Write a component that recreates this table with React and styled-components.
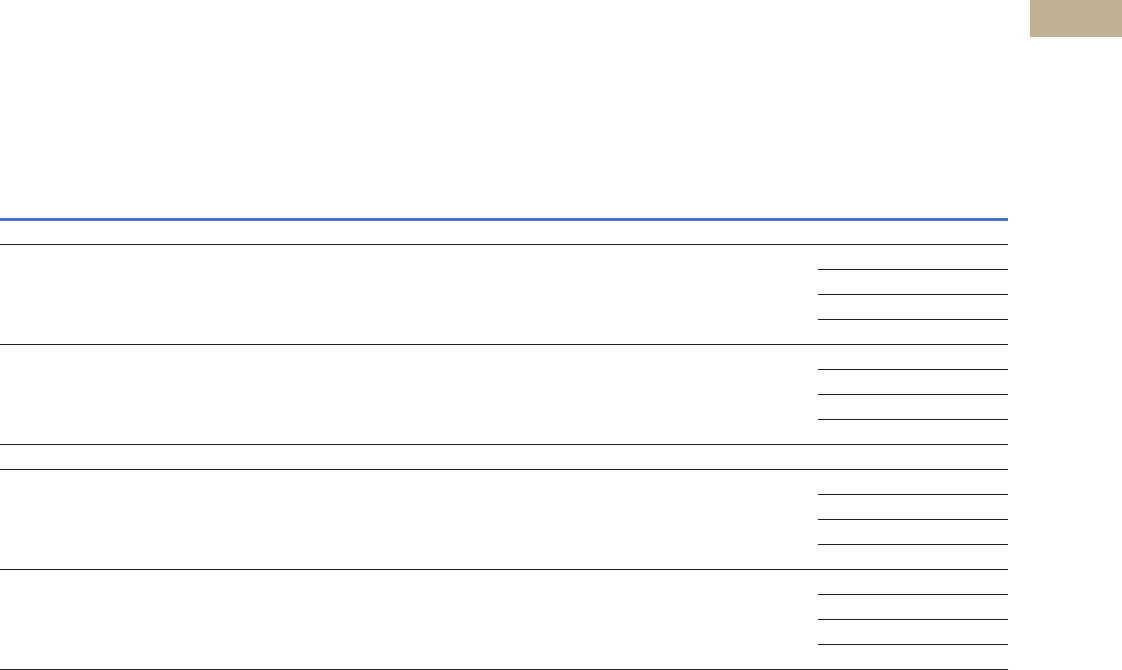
import React from 'react';
import styled, { createGlobalStyle } from 'styled-components';

const GlobalStyle = createGlobalStyle`
  html, body {
    margin: 0;
    padding: 0;
    background: #ffffff;
    font-family: 'Liberation Sans', Arial, sans-serif;
  }
`;

const Page = styled.div`
  width: 1122px;
  height: 670px;
  display: flex;
  flex-direction: column;
  overflow: hidden;
`;

const TopBar = styled.div`
  display: flex;
  justify-content: flex-end;
  height: 37px;
`;

const Tab = styled.div`
  width: 92px;
  height: 37px;
  background: #c1b091;
`;

const Table = styled.div`
  margin-top: 181px;
  width: 1008px;
  border-top: 3px solid #4472c4;
  display: flex;
  flex-direction: column;
`;

const Row = styled.div`
  height: ${(p) => p.$h || 24}px;
  border-bottom: 1px solid #231f20;
`;

const Group = styled.div`
  display: flex;
`;

const LabelCell = styled.div`
  flex: 0 0 818px;
  height: 99px;
  border-bottom: 1px solid #231f20;
`;

const ValueCol = styled.div`
  flex: 1;
  display: flex;
  flex-direction: column;
`;

const ValueCell = styled.div`
  height: 24px;
  border-bottom: 1px solid #231f20;
`;

function RowGroup({ count = 4 }) {
  return (
    <Group>
      <LabelCell />
      <ValueCol>
        {Array.from({ length: count }, (_, i) => (
          <ValueCell key={i} />
        ))}
      </ValueCol>
    </Group>
  );
}

export default function App() {
  return (
    <Page>
      <GlobalStyle />
      <TopBar>
        <Tab />
      </TopBar>
      <Table>
        <Row $h={23} />
        <RowGroup />
        <RowGroup />
        <Row />
        <RowGroup />
        <RowGroup />
      </Table>
    </Page>
  );
}
